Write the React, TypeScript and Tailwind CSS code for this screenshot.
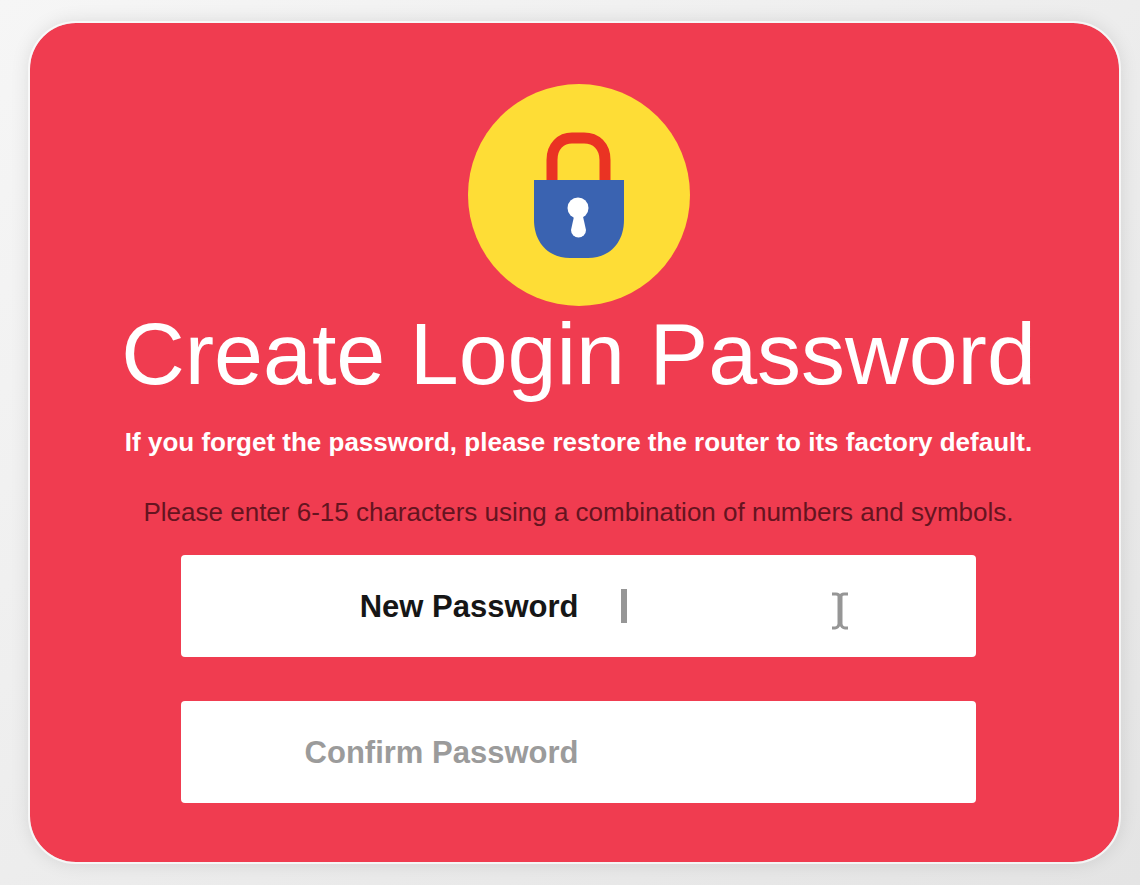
import { useState } from "react";

const fields = [
  { id: "new-password", label: "New Password", active: true },
  { id: "confirm-password", label: "Confirm Password", active: false },
];

function LockIcon() {
  return (
    <svg viewBox="0 0 222 222" className="size-[222px]" aria-hidden="true">
      <circle cx="111" cy="111" r="111" fill="#fedd36" />
      <path
        d="M84 98V76C84 62 93 54 104 54H116C128 54 137 62 137 76V98"
        fill="none"
        stroke="#ea3323"
        strokeWidth="11"
      />
      <path d="M66 96h90v40c0 23-15 38-36 38h-18c-21 0-36-15-36-38z" fill="#3a63b1" />
      <circle cx="110" cy="124" r="10.500" fill="#fff" />
      <path d="M107 128h7l4 18a7.500 7.500 0 0 1-15 0z" fill="#fff" />
    </svg>
  );
}

function TextCursor() {
  return (
    <svg
      viewBox="0 0 18 38"
      className="pointer-events-none absolute top-[37px] right-[127px] h-[38px] w-[18px]"
      fill="none"
      stroke="#969696"
      aria-hidden="true"
    >
      <path d="M9 4v30" strokeWidth="5" />
      <path d="M1 2h4q3 0 4 3q1-3 4-3h4M1 36h3q3 0 5-5q2 5 5 5h3" strokeWidth="3" />
    </svg>
  );
}

export default function App() {
  const [values, setValues] = useState<Record<string, string>>({});

  return (
    <main className="min-h-screen bg-linear-to-br from-[#f6f6f6] to-[#e4e4e4] pt-[23px] pr-[21px] pb-[23px] pl-[30px] font-['Liberation_Sans',Arial,sans-serif]">
      <section className="flex flex-col items-center rounded-[46px] bg-[#f03c50] pt-[61px] pb-[59px] pl-2 text-center shadow-[0_0_20px_rgba(0,0,0,0.12)] outline-2 outline-white/70">
        <LockIcon />

        {/* heading */}
        <h1 className="mt-[6px] text-[88px] leading-[84px] text-white">Create Login Password</h1>
        <p className="mt-[30px] text-[26px] leading-8 font-bold text-white">
          If you forget the password, please restore the router to its factory default.
        </p>
        <p className="mt-[38px] text-[26px] leading-8 text-[#651420]">
          Please enter 6-15 characters using a combination of numbers and symbols.
        </p>

        {/* password fields */}
        <form className="mt-[27px] flex w-full max-w-[795px] flex-col gap-11">
          {fields.map((field) => (
            <div key={field.id} className="relative flex h-[102px] items-center rounded bg-white">
              <label
                htmlFor={field.id}
                className={
                  field.active
                    ? "w-1/2 pt-[3px] text-right text-[31px] font-bold text-[#161616]"
                    : "w-1/2 pt-[3px] text-right text-[31px] font-bold text-[#9b9b9b]"
                }
              >
                {field.label}
              </label>
              <input
                id={field.id}
                type="password"
                value={values[field.id] ?? ""}
                onChange={(e) => setValues({ ...values, [field.id]: e.target.value })}
                className="h-full w-1/2 rounded bg-transparent px-11 text-[31px] outline-none"
              />
              {field.active && (
                <>
                  <span className="pointer-events-none absolute top-[34px] left-[440px] h-[34px] w-[6px] bg-[#969696]" />
                  <TextCursor />
                </>
              )}
            </div>
          ))}
        </form>
      </section>
    </main>
  );
}
